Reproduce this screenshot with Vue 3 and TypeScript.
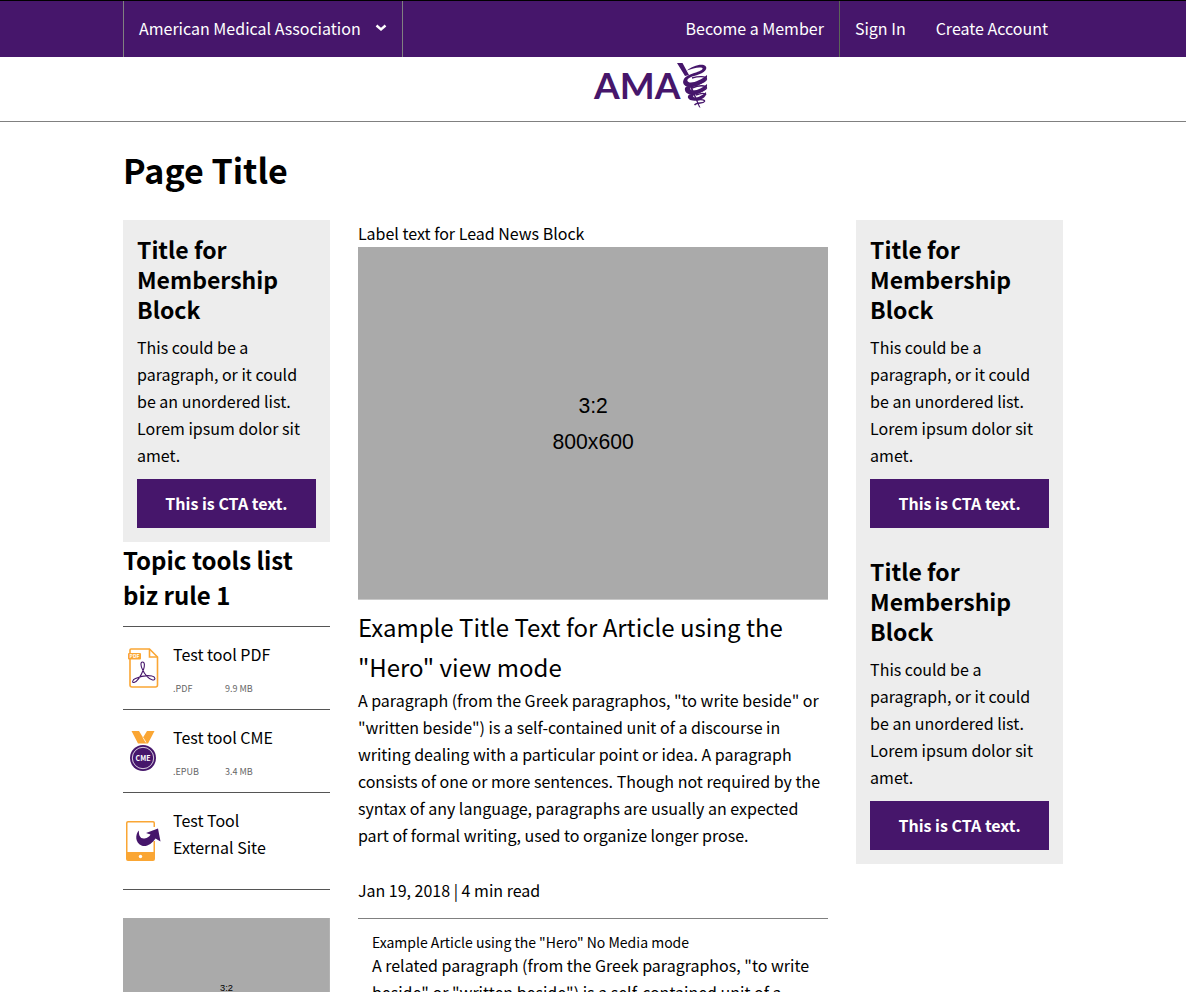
<script setup lang="ts">
interface Tool {
  name: string
  icon: 'pdf' | 'cme' | 'external'
  format?: string
  size?: string
}

const membership = {
  title: 'Title for Membership Block',
  text: 'This could be a paragraph, or it could be an unordered list. Lorem ipsum dolor sit amet.',
  cta: 'This is CTA text.',
}

const tools: Tool[] = [
  { name: 'Test tool PDF', icon: 'pdf', format: '.PDF', size: '9.9 MB' },
  { name: 'Test tool CME', icon: 'cme', format: '.EPUB', size: '3.4 MB' },
  { name: 'Test Tool External Site', icon: 'external' },
]
</script>

<template>
  <div class="page">
    <nav class="topbar" aria-label="Account">
      <div class="container topbar-inner">
        <button class="org" type="button" aria-haspopup="true">
          American Medical Association
          <svg class="chevron" viewBox="0 0 12 8" aria-hidden="true"><path d="M1.5 1.5 L6 5.5 L10.5 1.5" /></svg>
        </button>
        <div class="links">
          <a class="join" href="#join">Become a Member</a>
          <a href="#signin">Sign In</a>
          <a href="#create">Create Account</a>
        </div>
      </div>
    </nav>

    <header class="brand">
      <a class="logo" href="#home" aria-label="AMA home">
        <svg viewBox="0 0 116 48" aria-hidden="true">
          <text x="1" y="37">AMA</text>
          <path class="staff" d="M84 1 L89.500 1 L96 13 L92 14 Z M97 25 L99 25 L107.500 46 L106 45 Z" />
          <path d="M94 8.500 C99 4 109 1 112.500 4 C116 8 108 12.500 101 14 C96 15.500 92.500 18 95.500 20 C99 22 108 18 114 13 C115 18 109 22.500 102 24.500 C94 26.500 88.500 23 90.500 18 C92 14 98 12 103 10.500 C108 9 111 7 109 5.800 C106 4.500 99 6.500 94 8.500 Z" />
          <path d="M92 26 C93 24 98 23 100 23.500 C96 25.500 96.500 28 100 28.500 C105 28.500 110 25.500 114 22 C115 27 109 31 102 32.500 C95 33.500 91 30 92 26 Z" />
          <path d="M95 34 C96 32 99 31.500 102 32 C99 34 100 35.500 103 35.500 C107 35 111 32 113 30 C114 34 110 37.500 104 38.500 C98 39.500 94 37 95 34 Z" />
          <g class="snake">
            <path d="M99 16 C106 14 113 14 113.500 17 C113 21 104 22 99 24 M99 26 C106 23 113 23 113.500 26 C112 29.500 104 30 100 33 M103 33 C108 31 112 31 113 33 M104 38 C109 37 112 38 111.500 39.500 C110 42 104 40 101.500 43" />
          </g>
        </svg>
      </a>
    </header>

    <main class="container">
      <h1>Page Title</h1>
      <div class="columns">
        <aside>
          <section class="membership">
            <h2>{{ membership.title }}</h2>
            <p>{{ membership.text }}</p>
            <a class="cta" href="#cta">{{ membership.cta }}</a>
          </section>

          <section class="tools">
            <h2>Topic tools list biz rule 1</h2>
            <ul>
              <li v-for="tool in tools" :key="tool.name">
                <svg v-if="tool.icon === 'pdf'" class="icon" viewBox="0 0 40 40" aria-hidden="true">
                  <path class="line-orange" d="M8 1 H26.5 L34.5 9 V37 Q34.5 39 32.5 39 H9 Q7 39 7 37 V2 Q7 1 8 1 Z" />
                  <path class="line-orange" d="M26.5 1 V9 H34.5" />
                  <rect class="fill-orange" x="5" y="5" width="13" height="6.5" rx="1" />
                  <text class="pdf-label" x="11.5" y="10.2">PDF</text>
                  <path class="acrobat" d="M19.500 14 C17 14 18 19 19.500 21.500 C21.500 26.500 26 31.500 29.500 32 C33 32.500 32.500 28.500 29 28 C23 27 17 28.500 12.500 30.500 C9 32 9 35 11 34.500 C14.500 33.500 18.500 26.500 20.500 21.500 C21.700 18 22 14 19.500 14 Z" />
                </svg>
                <svg v-else-if="tool.icon === 'cme'" class="icon" viewBox="0 0 40 40" aria-hidden="true">
                  <path class="fill-orange" d="M8.500 0 H16 L20 6.500 L24 0 H31.500 L25 12.500 H15 Z" />
                  <path class="notch" d="M20 6.500 L23 11.500" />
                  <circle class="fill-purple" cx="20" cy="27" r="13" />
                  <circle class="ring" cx="20" cy="27" r="10.700" />
                  <text class="cme-label" x="20" y="29.800">CME</text>
                </svg>
                <svg v-else class="icon" viewBox="0 0 40 40" aria-hidden="true">
                  <path class="fill-orange" fill-rule="evenodd" d="M5 0 H30 Q32 0 32 2 V38 Q32 40 30 40 H5 Q3 40 3 38 V2 Q3 0 5 0 Z M4.500 2 V31 H30.500 V2 Q30.500 1.500 30 1.500 H5 Q4.500 1.500 4.500 2 Z" />
                  <circle class="dot" cx="17.500" cy="35.500" r="1.700" />
                  <path class="gap" d="M24 6 H36 V20 H24 Z" />
                  <path class="fill-purple" d="M16 9.500 C15.500 14 17 18 21.500 17.500 C24.500 17 26.500 15.500 27.500 13.500 L23 12 L35 7.500 L37.500 20.500 L32.500 17.500 C29 23 23 26.500 18.500 24.500 C12 22 12 13 16 9.500 Z" />
                </svg>
                <div class="tool-body">
                  <a href="#tool">{{ tool.name }}</a>
                  <div v-if="tool.format" class="meta">
                    <span>{{ tool.format }}</span>
                    <span>{{ tool.size }}</span>
                  </div>
                </div>
              </li>
            </ul>
          </section>

          <svg class="placeholder promo" viewBox="0 0 800 600" role="img" aria-label="Placeholder">
            <rect width="800" height="600" />
            <text x="400" y="283">3:2</text>
            <text x="400" y="344">800x600</text>
          </svg>
        </aside>

        <article class="lead">
          <p>Label text for Lead News Block</p>
          <svg class="placeholder" viewBox="0 0 800 600" role="img" aria-label="Placeholder">
            <rect width="800" height="600" />
            <text x="400" y="283">3:2</text>
            <text x="400" y="344">800x600</text>
          </svg>
          <h2>Example Title Text for Article using the "Hero" view mode</h2>
          <p>
            A paragraph (from the Greek paragraphos, "to write beside" or "written beside") is a
            self-contained unit of a discourse in writing dealing with a particular point or idea. A
            paragraph consists of one or more sentences. Though not required by the syntax of any
            language, paragraphs are usually an expected part of formal writing, used to organize
            longer prose.
          </p>
          <p class="date">Jan 19, 2018 | 4 min read</p>
          <section class="related">
            <h3>Example Article using the "Hero" No Media mode</h3>
            <p>
              A related paragraph (from the Greek paragraphos, "to write beside" or "written
              beside") is a self-contained unit of a
            </p>
          </section>
        </article>

        <aside>
          <section v-for="n in 2" :key="n" class="membership">
            <h2>{{ membership.title }}</h2>
            <p>{{ membership.text }}</p>
            <a class="cta" href="#cta">{{ membership.cta }}</a>
          </section>
        </aside>
      </div>
    </main>
  </div>
</template>

<style>
body {
  margin: 0;
  background: #fff;
}
</style>

<style scoped>
.page {
  --purple: #46166b;
  --orange: #faa634;
  color: #000;
  font-family: "Noto Sans CJK SC", "Noto Sans", sans-serif;
  font-size: 16px;
  line-height: 27px;
}

.page * {
  box-sizing: border-box;
}

h1,
h2,
h3,
p,
ul {
  margin: 0;
  padding: 0;
}

a {
  color: inherit;
  text-decoration: none;
}

.container {
  max-width: 940px;
  margin: 0 auto;
}

.topbar {
  background: var(--purple);
  border-top: 1px solid #000;
  color: #fff;
}

.topbar-inner {
  display: flex;
  justify-content: space-between;
  height: 56px;
}

.org {
  display: flex;
  align-items: center;
  gap: 14px;
  padding: 0 15px 2px;
  border: 0 solid #808080;
  border-width: 0 1px;
  background: none;
  color: inherit;
  font: inherit;
}

.chevron {
  width: 12px;
  height: 8px;
  fill: none;
  stroke: #fff;
  stroke-width: 2.4;
}

.links {
  display: flex;
}

.links a {
  display: flex;
  align-items: center;
  padding: 0 15px 2px;
}

.links .join {
  border-right: 1px solid #5c6558;
}

.brand {
  display: flex;
  padding: 5px 0 11px 50%;
  border-bottom: 1px solid #808080;
}

.logo {
  display: block;
  height: 48px;
}

.logo svg {
  display: block;
  width: 116px;
  height: 48px;
  fill: var(--purple);
}

.logo text {
  font: bold 37px Lato, sans-serif;
}

.snake {
  fill: none;
  stroke: var(--purple);
  stroke-width: 1.4;
}

h1 {
  padding: 23px 0 25px;
  font-size: 34px;
  line-height: 50px;
}

.columns {
  display: grid;
  grid-template-columns: 22fr 50fr 22fr;
  gap: 28px;
  align-items: start;
}

.membership {
  padding: 14px;
  background: #ededed;
}

.membership h2 {
  font-size: 23px;
  line-height: 30px;
}

.membership p {
  margin: 10px 0;
}

.cta {
  display: block;
  padding: 11px;
  background: var(--purple);
  color: #fff;
  font-weight: bold;
  text-align: center;
}

.tools h2 {
  padding-bottom: 14px;
  font-size: 24px;
  line-height: 35px;
}

.tools ul {
  border-top: 1px solid #555;
  list-style: none;
}

.tools li {
  display: grid;
  grid-template-columns: 50px 1fr;
  align-items: center;
  border-bottom: 1px solid #555;
}

.icon {
  width: 40px;
  height: 40px;
}

.tool-body {
  padding: 14px 30px 28px 0;
}

.tool-body:has(.meta) {
  padding: 14px 0 7px;
}

.meta {
  display: flex;
  margin-top: 7px;
  color: #666;
  font-size: 9px;
}

.meta span {
  width: 52px;
}

.fill-orange {
  fill: var(--orange);
}

.fill-purple {
  fill: var(--purple);
}

.line-orange {
  fill: none;
  stroke: var(--orange);
  stroke-width: 1.6;
}

.acrobat {
  fill: none;
  stroke: var(--purple);
  stroke-width: 1.1;
}

.pdf-label,
.cme-label {
  fill: #fff;
  font-weight: bold;
  text-anchor: middle;
}

.pdf-label {
  font-size: 5px;
}

.cme-label {
  font-size: 7px;
}

.ring,
.notch {
  fill: none;
  stroke: #fff;
  stroke-width: 0.8;
}

.dot,
.gap {
  fill: #fff;
}

.placeholder {
  display: block;
  width: 100%;
  height: auto;
}

.placeholder rect {
  fill: #aaa;
}

.placeholder text {
  font: 36px "Liberation Sans", sans-serif;
  text-anchor: middle;
}

.promo {
  margin-top: 28px;
}

.lead h2 {
  padding-top: 7px;
  font-size: 24px;
  font-weight: normal;
  line-height: 40px;
}

.date {
  padding: 28px 0 14px;
}

.related {
  padding: 14px 14px 0;
  border-top: 1px solid #808080;
}

.related h3 {
  font-size: 14px;
  font-weight: normal;
  line-height: 19px;
}
</style>
